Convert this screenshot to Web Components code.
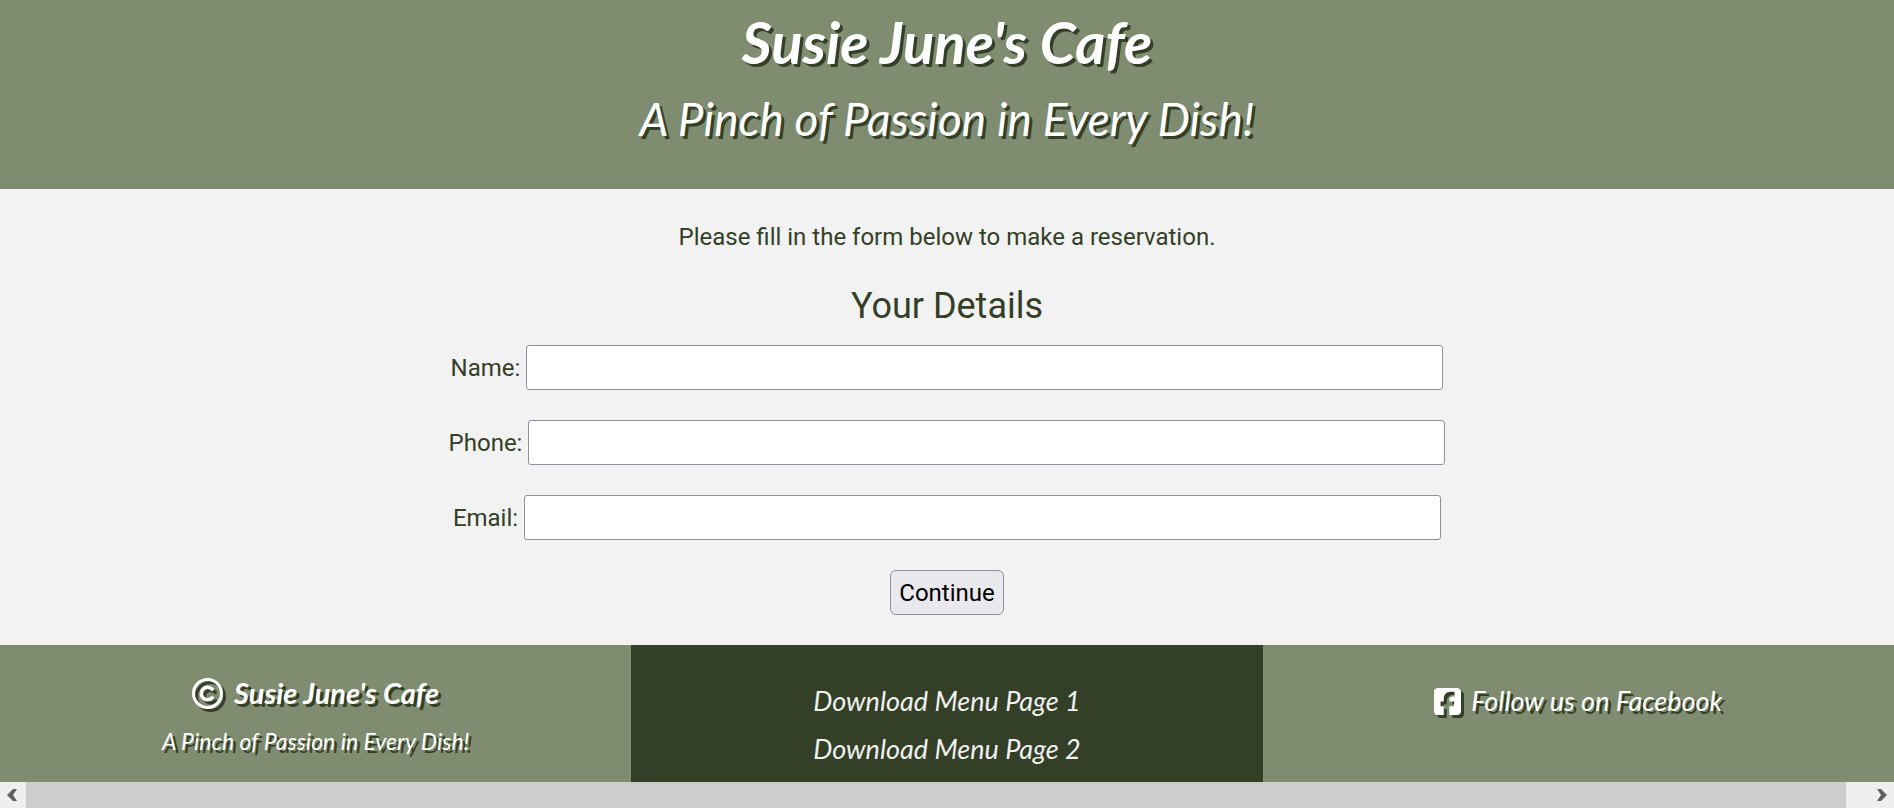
<!DOCTYPE html>
<html lang="en">
<head>
<meta charset="utf-8">
<title>Susie June's Cafe</title>
<style>
  :root {
    --sage: #7f8c70;
    --forest: #333f26;
    --paper: #f2f2f2;
    --hand: Lato, "Open Sans", sans-serif;
  }
  body {
    margin: 0;
    background: var(--paper);
    color: var(--forest);
    font: 24px/28px Roboto, "Liberation Sans", sans-serif;
  }
</style>
</head>
<body>
<cafe-page>
  <cafe-header slot="header"></cafe-header>
  <reservation-form>
    <form-field name="name" label="Name:"></form-field>
    <form-field name="phone" type="tel" label="Phone:"></form-field>
    <form-field name="email" type="email" label="Email:"></form-field>
  </reservation-form>
  <cafe-footer slot="footer"></cafe-footer>
</cafe-page>
<scroll-strip></scroll-strip>

<script>
function define(name, html, setup) {
  const template = document.createElement('template');
  template.innerHTML = html;
  customElements.define(name, class extends HTMLElement {
    constructor() {
      super();
      this.attachShadow({ mode: 'open' }).append(template.content.cloneNode(true));
    }
    connectedCallback() {
      if (setup) setup(this, this.shadowRoot);
    }
  });
}

define('cafe-page', `
  <style>:host { display: block; } main { display: block; }</style>
  <slot name="header"></slot>
  <main><slot></slot></main>
  <slot name="footer"></slot>
`);

define('cafe-header', `
  <style>
    :host { display: block; }
    header {
      padding: 7px 16px 42px;
      background: var(--sage);
      color: #fff;
      font-family: var(--hand);
      font-style: italic;
      text-align: center;
      text-shadow: 3px 3px var(--forest);
    }
    h1 { margin: 0 0 14px; font-size: 58px; line-height: 70px; font-weight: 700; }
    p { margin: 0; font-size: 46px; line-height: 56px; }
  </style>
  <header>
    <h1>Susie June's Cafe</h1>
    <p>A Pinch of Passion in Every Dish!</p>
  </header>
`);

define('form-field', `
  <style>
    :host { display: flex; justify-content: center; align-items: center; gap: 6px; }
    input {
      box-sizing: border-box;
      width: calc(50% - 30px);
      height: 45px;
      padding: 7px;
      border: 1px solid #8f8f9d;
      border-radius: 3px;
      background: #fff;
      color: #000;
      font: inherit;
    }
  </style>
  <label for="field"></label><input id="field">
`, (host, root) => {
  root.querySelector('label').textContent = host.getAttribute('label');
  const input = root.querySelector('input');
  input.name = host.getAttribute('name');
  input.type = host.getAttribute('type') || 'text';
});

define('reservation-form', `
  <style>
    :host { display: block; padding: 34px 0 30px; text-align: center; }
    p { margin: 0 0 34px; }
    h2 { margin: 0 0 18px; font-size: 36px; line-height: 42px; font-weight: 400; }
    form { display: flex; flex-direction: column; gap: 30px; }
    button {
      align-self: center;
      height: 45px;
      padding: 0 8px;
      border: 1px solid #8f8f9d;
      border-radius: 6px;
      background: #e9e9ed;
      color: #000;
      font: inherit;
    }
  </style>
  <p>Please fill in the form below to make a reservation.</p>
  <h2>Your Details</h2>
  <form>
    <slot></slot>
    <button type="button">Continue</button>
  </form>
`);

define('cafe-footer', `
  <style>
    :host { display: block; }
    footer {
      display: grid;
      grid-template-columns: repeat(3, 1fr);
      background: var(--sage);
      color: #fff;
      font-family: var(--hand);
      font-style: italic;
      text-align: center;
    }
    .brand { padding-top: 30px; text-shadow: 3px 3px var(--forest); }
    h3 {
      display: flex; justify-content: center; align-items: center; gap: 11px;
      margin: 0 0 16px; font-size: 29px; line-height: 36px; font-weight: 700;
    }
    .brand p { margin: 0; font-size: 23px; line-height: 28px; }
    svg { flex: none; fill: currentColor; filter: drop-shadow(3px 3px 0 var(--forest)); }
    a { color: inherit; text-decoration: none; }
    .menus, .social { padding: 32px 0 9px; font-size: 27px; line-height: 48px; }
    .menus { background: var(--forest); color: #f1f1f1; }
    .menus a { display: block; }
    .social a {
      display: flex; justify-content: center; align-items: center; gap: 10px;
      text-shadow: 3px 3px var(--forest);
    }
  </style>
  <footer>
    <section class="brand">
      <h3>
        <svg width="31" height="31" viewBox="0 0 31 31" aria-hidden="true">
          <g fill="none" stroke="currentColor">
            <circle cx="15.5" cy="15.5" r="14" stroke-width="3"/>
            <path d="M20.2 11.2a6.3 6.3 0 1 0 0 8.6" stroke-width="3.500" stroke-linecap="round"/>
          </g>
        </svg>
        <span>Susie June's Cafe</span>
      </h3>
      <p>A Pinch of Passion in Every Dish!</p>
    </section>
    <nav class="menus">
      <a href="#menu-1">Download Menu Page 1</a>
      <a href="#menu-2">Download Menu Page 2</a>
    </nav>
    <section class="social">
      <a href="#facebook">
        <svg width="27" height="27" viewBox="0 32 448 448" aria-hidden="true">
          <path d="M64 32C28.700 32 0 60.700 0 96V416c0 35.300 28.700 64 64 64h98.200V334.200H109.400V256h52.800V222.300c0-87.100 39.400-127.500 125-127.500 16.200 0 44.200 3.200 55.700 6.400V172c-6-.6-16.500-1-29.600-1-42 0-58.200 15.900-58.200 57.200V256h83.600l-14.400 78.200H255V480H384c35.300 0 64-28.700 64-64V96c0-35.300-28.700-64-64-64H64z"/>
        </svg>
        <span>Follow us on Facebook</span>
      </a>
    </section>
  </footer>
`);

define('scroll-strip', `
  <style>
    :host { display: flex; height: 26px; background: #efefef; }
    button {
      display: grid; place-items: center;
      width: 26px; height: 26px; padding: 0; border: 0; background: #efefef;
    }
    .track { flex: 1; padding-right: 22px; }
    .thumb { height: 26px; background: #cdcdcd; }
    svg { fill: #606060; }
  </style>
  <button type="button" aria-label="Scroll left"><svg width="14" height="12" viewBox="0 0 14 12"><path d="M7 0h4L7 6l4 6H7L1 6z"/></svg></button>
  <div class="track"><div class="thumb"></div></div>
  <button type="button" aria-label="Scroll right"><svg width="14" height="12" viewBox="0 0 14 12"><path d="M7 0H3l4 6-4 6h4l6-6z"/></svg></button>
`);
</script>
</body>
</html>
